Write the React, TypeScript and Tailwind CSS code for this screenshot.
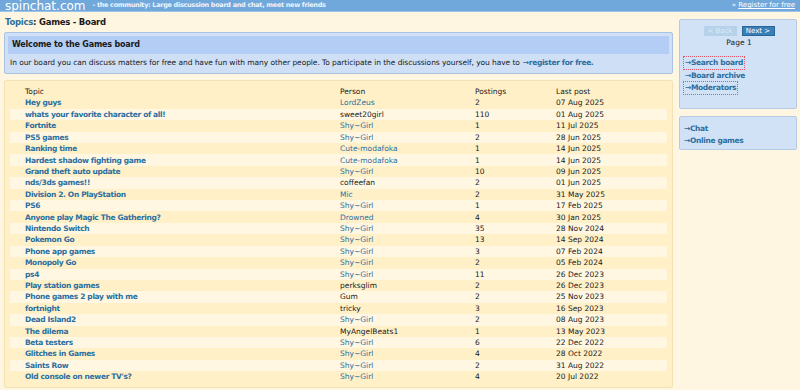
const rows: [string, string, boolean, number, string][] = [
  ["Hey guys", "LordZeus", true, 2, "07 Aug 2025"],
  ["whats your favorite character of all!", "sweet20girl", false, 110, "01 Aug 2025"],
  ["Fortnite", "Shy~Girl", true, 1, "11 Jul 2025"],
  ["PS5 games", "Shy~Girl", true, 2, "28 Jun 2025"],
  ["Ranking time", "Cute-modafoka", true, 1, "14 Jun 2025"],
  ["Hardest shadow fighting game", "Cute-modafoka", true, 1, "14 Jun 2025"],
  ["Grand theft auto update", "Shy~Girl", true, 10, "09 Jun 2025"],
  ["nds/3ds games!!", "coffeefan", false, 2, "01 Jun 2025"],
  ["Division 2. On PlayStation", "Mic", true, 2, "31 May 2025"],
  ["PS6", "Shy~Girl", true, 1, "17 Feb 2025"],
  ["Anyone play Magic The Gathering?", "Drowned", true, 4, "30 Jan 2025"],
  ["Nintendo Switch", "Shy~Girl", true, 35, "28 Nov 2024"],
  ["Pokemon Go", "Shy~Girl", true, 13, "14 Sep 2024"],
  ["Phone app games", "Shy~Girl", true, 3, "07 Feb 2024"],
  ["Monopoly Go", "Shy~Girl", true, 2, "05 Feb 2024"],
  ["ps4", "Shy~Girl", true, 11, "26 Dec 2023"],
  ["Play station games", "perksglim", false, 2, "26 Dec 2023"],
  ["Phone games 2 play with me", "Gum", false, 2, "25 Nov 2023"],
  ["fortnight", "tricky", false, 3, "16 Sep 2023"],
  ["Dead Island2", "Shy~Girl", true, 2, "08 Aug 2023"],
  ["The dilema", "MyAngelBeats1", false, 1, "13 May 2023"],
  ["Beta testers", "Shy~Girl", true, 6, "22 Dec 2022"],
  ["Glitches in Games", "Shy~Girl", true, 4, "28 Oct 2022"],
  ["Saints Row", "Shy~Girl", true, 2, "31 Aug 2022"],
  ["Old console on newer TV's?", "Shy~Girl", true, 4, "20 Jul 2022"],
]

const cols = "grid grid-cols-[315px_135px_81px_1fr] h-[11.42px] items-center pl-[15px]"

export default function App() {
  return (
    <div className="w-[800px] h-[390px] overflow-hidden bg-[#fff6e1] text-[7.5px] text-[#1a1a1a] font-['DejaVu_Sans',sans-serif]">
      {/* top bar */}
      <div className="h-[12px] bg-[#71a8db] border-b border-[#9cc3e8] flex items-center px-[5px] text-white">
        <span className="text-[12px] leading-none">spinchat.com</span>
        <span className="ml-[7px] font-bold text-[6.5px] tracking-[-0.3px] text-[#eef4fc]">- the community: Large discussion board and chat, meet new friends</span>
        <span className="ml-auto text-[7px]">» <span className="underline">Register for free</span></span>
      </div>

      <div className="flex gap-[6px] pl-[4px] pr-[3px]">
        <div className="w-[669px]">
          <div className="h-[19px] flex items-center pt-[2px] pl-[1px] text-[8.5px] tracking-[-0.25px] font-bold">
            <span className="text-[#2b6fa0]">Topics</span>: Games - Board
          </div>

          {/* welcome */}
          <div className="mt-[1px] h-[42px] bg-[#cedff6] border border-[#abc3e2] rounded-[2px] px-[3px] pt-[3px]">
            <div className="h-[18px] bg-[#b4cdf4] flex items-center pl-[4px] text-[8px] tracking-[-0.2px] font-bold">Welcome to the Games board</div>
            <div className="h-[17px] flex items-center pl-[2px] tracking-[-0.07px]">
              In our board you can discuss matters for free and have fun with many other people. To participate in the discussions yourself, you have to
              <span className="text-[#2b6fa0] ml-[3px] font-bold tracking-[-0.35px]">→register for free.</span>
            </div>
          </div>

          {/* topics table */}
          <div className="mt-[6px] h-[308px] bg-[#fff0c8] border border-[#f2e2b4] rounded-[2px] px-[5px] pt-[5px]">
            <div className={cols}>
              <span>Topic</span>
              <span>Person</span>
              <span>Postings</span>
              <span>Last post</span>
            </div>
            {rows.map((r, i) => (
              <div key={i} className={`${cols} ${i % 2 === 1 ? "bg-[#fff7e2]" : ""}`}>
                <span className="font-bold tracking-[-0.35px] text-[#2b6fa0]">{r[0]}</span>
                <span className={r[2] ? "text-[#2b6fa0]" : ""}>{r[1]}</span>
                <span>{r[3]}</span>
                <span>{r[4]}</span>
              </div>
            ))}
          </div>
        </div>

        {/* sidebar */}
        <div className="w-[118px] pt-[7px] flex flex-col gap-[7px]">
          <div className="h-[90px] bg-[#d1e1f6] border border-[#b6cae6] rounded-[2px] pt-[6px] px-[3px]">
            <div className="flex justify-center gap-[5px] pl-[2px]">
              <span className="w-[33px] h-[10px] bg-[#b6d2ea] text-[#dfeaf5] text-[7px] flex items-center justify-center">&lt; Back</span>
              <span className="w-[33px] h-[10px] bg-[#3a80b8] border border-[#2a6597] text-white text-[7px] flex items-center justify-center">Next &gt;</span>
            </div>
            <div className="text-center mt-[2px] pl-[2px] h-[10px] leading-[10px]">Page 1</div>
            <div className="mt-[8px] flex flex-col font-bold tracking-[-0.35px] text-[#2b6fa0] leading-[11.5px]">
              <span className="self-start border border-dotted border-[#e0556a] px-[1px]">→Search board</span>
              <span className="self-start px-[2px]">→Board archive</span>
              <span className="self-start border border-dotted border-[#e0556a] px-[1px]">→Moderators</span>
            </div>
          </div>
          <div className="h-[34px] bg-[#d1e1f6] border border-[#b6cae6] rounded-[2px] pt-[6px] px-[4px] font-bold tracking-[-0.35px] text-[#2b6fa0] leading-[11.5px] flex flex-col">
            <span>→Chat</span>
            <span>→Online games</span>
          </div>
        </div>
      </div>
    </div>
  )
}
